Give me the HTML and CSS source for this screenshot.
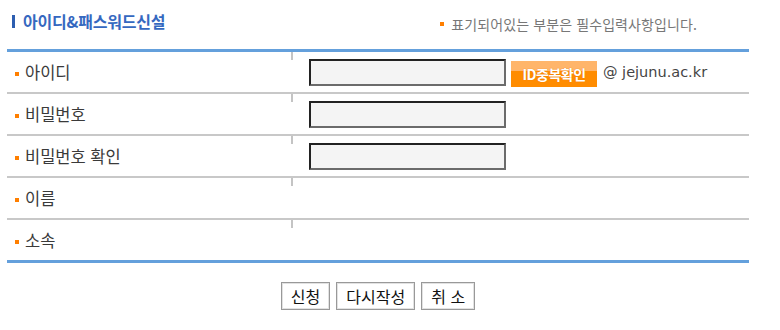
FILE: index.html
```html
<!DOCTYPE html>
<html lang="ko">
<head>
    <meta charset="UTF-8">
    <title>아이디&amp;패스워드신설</title>
    <link rel="stylesheet" href="styles.css">
</head>
<body>

    <div class="container">
        <div class="header">
            <h2 class="title"><span class="title-bar"></span>아이디&amp;패스워드신설</h2>
            <p class="note"><span class="dot"></span>표기되어있는 부분은 필수입력사항입니다.</p>
        </div>

        <div class="form">
            <div class="row">
                <div class="label"><span class="dot"></span>아이디</div>
                <div class="field">
                    <input type="text" class="box">
                    <button class="check-btn">ID중복확인</button>
                    <span class="domain">@ jejunu.ac.kr</span>
                </div>
            </div>
            <div class="row">
                <div class="label"><span class="dot"></span>비밀번호</div>
                <div class="field"><input type="password" class="box"></div>
            </div>
            <div class="row">
                <div class="label"><span class="dot"></span>비밀번호 확인</div>
                <div class="field"><input type="password" class="box"></div>
            </div>
            <div class="row">
                <div class="label"><span class="dot"></span>이름</div>
                <div class="field"></div>
            </div>
            <div class="row">
                <div class="label"><span class="dot"></span>소속</div>
                <div class="field"></div>
            </div>
        </div>

        <div class="actions">
            <button class="btn">신청</button>
            <button class="btn">다시작성</button>
            <button class="btn">취 소</button>
        </div>
    </div>

</body>
</html>
```

FILE: styles.css
```css
* {
    box-sizing: border-box;
    margin: 0;
    padding: 0;
}
body {
    font-family: "Noto Sans CJK KR", "Noto Sans", sans-serif;
    background-color: white;
    color: #3a3a3a;
}
.container {
    width: 742px;
    margin-left: 7px;
}
.header {
    height: 49px;
    display: flex;
    justify-content: space-between;
    align-items: flex-start;
    border-bottom: 3px solid #64a0dc;
    box-sizing: content-box;
}
.title {
    display: flex;
    align-items: center;
    font-size: 16px;
    font-weight: bold;
    color: #3568c0;
    letter-spacing: -0.2px;
    margin-top: 9px;
    padding-left: 5px;
}
.title-bar {
    display: inline-block;
    width: 3px;
    height: 13px;
    background-color: #2d5eb0;
    margin-right: 8px;
}
.note {
    display: flex;
    align-items: center;
    font-size: 14px;
    color: #777;
    letter-spacing: 0.1px;
    margin-top: 14px;
    margin-right: 52px;
}
.note .dot {
    margin-right: 7px;
}
.dot {
    display: inline-block;
    width: 4px;
    height: 4px;
    background-color: #ff7f00;
}
.row {
    display: grid;
    grid-template-columns: 284px 1fr;
    height: 42px;
    border-bottom: 2px solid #c8c8c8;
}
.row:last-child {
    height: 43px;
    border-bottom: 3px solid #64a0dc;
}
.label {
    display: flex;
    align-items: center;
    padding-left: 8px;
    font-size: 16.5px;
}
.label .dot {
    margin-right: 6px;
    margin-top: 4px;
}
.field {
    display: flex;
    align-items: center;
    padding-left: 18px;
    background: linear-gradient(#c4c4c4, #c4c4c4) no-repeat 0 0 / 2px 8px;
}
.box {
    width: 197px;
    height: 27px;
    background-color: #f4f4f4;
    border: 2px solid;
    border-color: #222 #6b6b6b #6b6b6b #222;
    outline: none;
}
.check-btn {
    width: 86px;
    height: 26px;
    margin-left: 5px;
    margin-top: 3px;
    border: none;
    background: linear-gradient(#ffb56a 0, #ffb56a 38%, #ff8c00 38%);
    color: white;
    font-family: inherit;
    font-size: 14px;
    font-weight: bold;
    letter-spacing: -0.5px;
    text-shadow: 0 0 1px #e07000;
    cursor: pointer;
}
.domain {
    margin-left: 6px;
    font-family: "DejaVu Sans", sans-serif;
    font-size: 14.5px;
    color: #444;
}
.actions {
    display: flex;
    justify-content: center;
    gap: 6px;
    margin-top: 19px;
}
.btn {
    height: 28px;
    padding: 0 9px;
    background-color: white;
    border: 1px solid #999;
    box-shadow: inset 0 0 0 1px #e2e2e2;
    font-family: inherit;
    font-size: 16px;
    color: #111;
    cursor: pointer;
}
```
